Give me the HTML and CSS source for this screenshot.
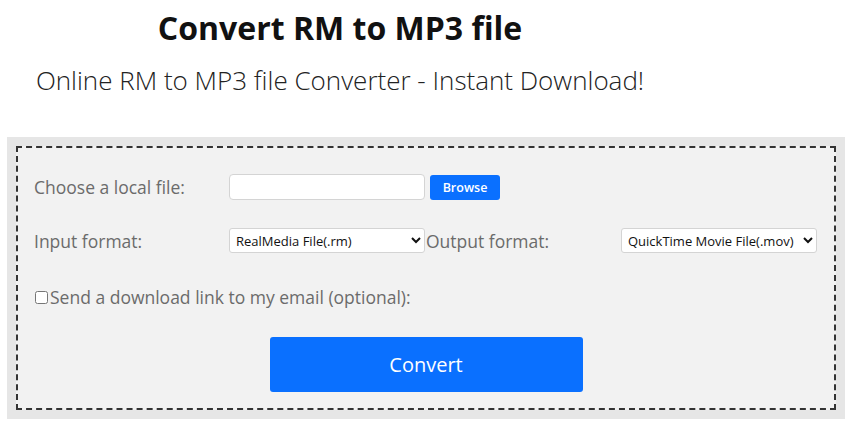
FILE: index.html
```html
<!DOCTYPE html>
<html lang="en">
<head>
<meta charset="utf-8">
<title>Convert RM to MP3 file</title>
<link rel="stylesheet" href="styles.css">
</head>
<body>
<header class="head">
  <h1 class="title">Convert RM to MP3 file</h1>
  <p class="subtitle">Online RM to MP3 file Converter - Instant Download!</p>
</header>
<section class="panel">
  <form class="box">
    <div class="row">
      <label class="lbl">Choose a local file:</label>
      <div class="filecell">
        <input class="text" type="text">
        <button type="button" class="browse">Browse</button>
      </div>
    </div>
    <div class="row row2">
      <label class="lbl">Input format:</label>
      <select class="sel"><option>RealMedia File(.rm)</option></select>
      <label class="lbl">Output format:</label>
      <select class="sel"><option>QuickTime Movie File(.mov)</option></select>
    </div>
    <div class="check">
      <input type="checkbox" class="cb" id="cb"><label for="cb">Send a download link to my email (optional):</label>
    </div>
    <div class="actions">
      <button type="button" class="convert">Convert</button>
    </div>
  </form>
</section>
</body>
</html>
```
FILE: styles.css
```css
html, body {
  margin: 0;
  padding: 0;
  background: #ffffff;
  font-family: "Open Sans", "Noto Sans", sans-serif;
}
.head {
  width: 680px;
  text-align: center;
  padding-top: 8px;
  height: 129px;
  box-sizing: border-box;
}
.title {
  margin: 0;
  font-size: 32px;
  line-height: 40px;
  font-weight: 700;
  color: #111;
}
.subtitle {
  margin: 16px 0 0;
  font-size: 26px;
  line-height: 32px;
  font-weight: 300;
  color: #222;
}
.panel {
  margin: 8px 8px 0 7px;
  width: 838px;
  box-sizing: border-box;
  padding: 9px;
  background: #e6e6e6;
}
.box {
  border: 2px dashed #333;
  background: #f2f2f2;
  padding: 26px 15px 16px;
  margin: 0;
}
.row {
  display: grid;
  grid-template-columns: 196px 196px 196px 196px;
  align-items: center;
  height: 26px;
}
.row2 {
  margin-top: 28px;
  height: 25px;
}
.lbl {
  font-size: 17.5px;
  color: #6b6b6b;
  padding-left: 1px;
  white-space: nowrap;
}
.filecell {
  display: flex;
  align-items: center;
  grid-column: 2 / span 2;
}
.text {
  width: 196px;
  height: 26px;
  box-sizing: border-box;
  border: 1px solid #d4d4d4;
  border-radius: 4px;
  background: #fff;
  margin: 0;
}
.browse {
  margin-left: 5px;
  height: 25px;
  width: 70px;
  border: none;
  border-radius: 3px;
  background: #0a70ff;
  color: #fff;
  font-family: "Open Sans", sans-serif;
  font-size: 12.5px;
  font-weight: 600;
  padding: 0;
}
.sel {
  width: 196px;
  height: 25px;
  box-sizing: border-box;
  border: 1px solid #d4d4d4;
  border-radius: 3px;
  background: #fff;
  font-family: "Open Sans", sans-serif;
  font-size: 13px;
  color: #111;
  margin: 0;
  padding: 0 2px;
}
.check {
  margin-top: 33px;
  height: 22px;
  display: flex;
  align-items: center;
  font-size: 17.5px;
  color: #6b6b6b;
  white-space: nowrap;
}
.cb {
  margin: 1px 2px 0 2px;
  width: 13px;
  height: 13px;
}
.actions {
  margin-top: 29px;
  display: flex;
  justify-content: center;
}
.convert {
  width: 313px;
  height: 55px;
  border: none;
  border-radius: 3px;
  background: #0a70ff;
  color: #fff;
  font-family: "Open Sans", sans-serif;
  font-size: 20px;
  padding: 0;
}
```
